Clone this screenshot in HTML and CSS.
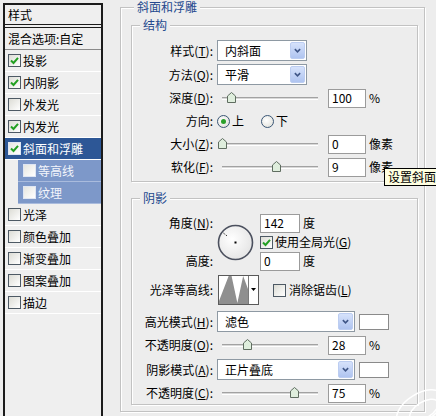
FILE: index.html
```html
<!DOCTYPE html>
<html lang="zh">
<head>
<meta charset="utf-8">
<title>图层样式</title>
<link rel="stylesheet" href="styles.css">
</head>
<body>
<div class="dialog">
  <aside class="sidebar">
    <div class="side-head">样式</div>
    <div class="side-blend">混合选项:自定</div>
    <div class="side-row"><span class="cb"><svg viewBox="0 0 11 11"><path d="M2 5.5 L4.5 8 L9 2.8"/></svg></span>投影</div>
    <div class="side-row"><span class="cb"><svg viewBox="0 0 11 11"><path d="M2 5.5 L4.5 8 L9 2.8"/></svg></span>内阴影</div>
    <div class="side-row"><span class="cb"></span>外发光</div>
    <div class="side-row"><span class="cb"><svg viewBox="0 0 11 11"><path d="M2 5.5 L4.5 8 L9 2.8"/></svg></span>内发光</div>
    <div class="side-row sel"><span class="cb"><svg viewBox="0 0 11 11"><path d="M2 5.5 L4.5 8 L9 2.8"/></svg></span>斜面和浮雕</div>
    <div class="side-row sub"><span class="cb"></span>等高线</div>
    <div class="side-row sub"><span class="cb"></span>纹理</div>
    <div class="side-row"><span class="cb"></span>光泽</div>
    <div class="side-row"><span class="cb"></span>颜色叠加</div>
    <div class="side-row"><span class="cb"></span>渐变叠加</div>
    <div class="side-row"><span class="cb"></span>图案叠加</div>
    <div class="side-row"><span class="cb"></span>描边</div>
  </aside>

  <main class="panel">
    <fieldset class="group outer">
      <legend>斜面和浮雕</legend>

      <fieldset class="group inner struct">
        <legend>结构</legend>
        <div class="row r-sel first">
          <span class="lbl">样式(<u>T</u>):</span>
          <div class="select w90"><span class="val">内斜面</span><span class="drop"><svg viewBox="0 0 14 17"><path d="M4 7 L7 10 L10 7"/></svg></span></div>
        </div>
        <div class="row r-sel">
          <span class="lbl">方法(<u>Q</u>):</span>
          <div class="select w90"><span class="val">平滑</span><span class="drop"><svg viewBox="0 0 14 17"><path d="M4 7 L7 10 L10 7"/></svg></span></div>
        </div>
        <div class="row r-sl">
          <span class="lbl">深度(<u>D</u>):</span>
          <div class="slider"><span class="track"></span><svg class="thumb" style="left:10px" viewBox="0 0 9 11"><path d="M0.5 4 L4.5 0.5 L8.5 4 V10.5 H0.5 Z"/></svg></div>
          <span class="num">100</span><span class="unit">%</span>
        </div>
        <div class="row r-sl">
          <span class="lbl">方向:</span>
          <span class="radio on"></span><span class="rtext">上</span>
          <span class="radio second"></span><span class="rtext">下</span>
        </div>
        <div class="row r-sl">
          <span class="lbl">大小(<u>Z</u>):</span>
          <div class="slider"><span class="track"></span><svg class="thumb" style="left:1px" viewBox="0 0 9 11"><path d="M0.5 4 L4.5 0.5 L8.5 4 V10.5 H0.5 Z"/></svg></div>
          <span class="num">0</span><span class="unit">像素</span>
        </div>
        <div class="row r-sl">
          <span class="lbl">软化(<u>F</u>):</span>
          <div class="slider"><span class="track"></span><svg class="thumb" style="left:55px" viewBox="0 0 9 11"><path d="M0.5 4 L4.5 0.5 L8.5 4 V10.5 H0.5 Z"/></svg></div>
          <span class="num">9</span><span class="unit">像素</span>
        </div>
      </fieldset>

      <fieldset class="group inner shade">
        <legend>阴影</legend>
        <div class="angle">
          <span class="lbl a-lbl1">角度(<u>N</u>):</span>
          <svg class="dial" viewBox="0 0 37 37">
            <defs><radialGradient id="dg" cx="40%" cy="40%" r="70%"><stop offset="0" stop-color="#ffffff"/><stop offset="1" stop-color="#e2e2e2"/></radialGradient></defs>
            <circle cx="18.5" cy="18.5" r="17" fill="url(#dg)" stroke="#4b505e" stroke-width="1.6"/>
            <rect x="17.5" y="17.5" width="2" height="2" fill="#000"/>
            <path d="M9.8 11.7 L6.2 8.9" stroke="#000" stroke-width="1" stroke-dasharray="1 1"/>
          </svg>
          <div class="a-val1"><span class="num w40">142</span><span class="unit">度</span></div>
          <div class="a-chk"><span class="cb"><svg viewBox="0 0 11 11"><path d="M2 5.5 L4.5 8 L9 2.8"/></svg></span>使用全局光(<u>G</u>)</div>
          <span class="lbl a-lbl2">高度:</span>
          <div class="a-val2"><span class="num w40">0</span><span class="unit">度</span></div>
        </div>

        <div class="row r-contour">
          <span class="lbl">光泽等高线:</span>
          <div class="contour">
            <svg class="curve" viewBox="0 0 30 28" preserveAspectRatio="none"><path d="M0 28 L0 25 L10 0 L13 0 L19 27 L25 0 L30 13 L30 28 Z"/></svg>
            <span class="cdrop"><svg viewBox="0 0 9 28"><path d="M2 12 L7 12 L4.5 15 Z"/></svg></span>
          </div>
          <span class="cb gap"></span><span>消除锯齿(<u>L</u>)</span>
        </div>

        <div class="row r-sel hl">
          <span class="lbl">高光模式(<u>H</u>):</span>
          <div class="select w138"><span class="val">滤色</span><span class="drop"><svg viewBox="0 0 14 17"><path d="M4 7 L7 10 L10 7"/></svg></span></div>
          <span class="swatch"></span>
        </div>
        <div class="row r-sl">
          <span class="lbl">不透明度(<u>O</u>):</span>
          <div class="slider"><span class="track"></span><svg class="thumb" style="left:26px" viewBox="0 0 9 11"><path d="M0.5 4 L4.5 0.5 L8.5 4 V10.5 H0.5 Z"/></svg></div>
          <span class="num">28</span><span class="unit">%</span>
        </div>
        <div class="row r-sel sh">
          <span class="lbl">阴影模式(<u>A</u>):</span>
          <div class="select w138"><span class="val">正片叠底</span><span class="drop"><svg viewBox="0 0 14 17"><path d="M4 7 L7 10 L10 7"/></svg></span></div>
          <span class="swatch"></span>
        </div>
        <div class="row r-sl">
          <span class="lbl">不透明度(<u>C</u>):</span>
          <div class="slider"><span class="track"></span><svg class="thumb" style="left:73px" viewBox="0 0 9 11"><path d="M0.5 4 L4.5 0.5 L8.5 4 V10.5 H0.5 Z"/></svg></div>
          <span class="num">75</span><span class="unit">%</span>
        </div>
      </fieldset>
    </fieldset>
  </main>

  <div class="tooltip"><span class="tip-text">设置斜面和浮雕的大小</span></div>
  <svg class="mark" viewBox="0 0 52 38"><ellipse cx="36" cy="30" rx="26" ry="14" transform="rotate(-32 36 30)"/><ellipse cx="40" cy="32" rx="16" ry="8" transform="rotate(-32 40 32)"/></svg>
</div>
</body>
</html>
```

FILE: styles.css
```css
* { box-sizing: border-box; }
html, body { margin: 0; padding: 0; }
body {
  width: 436px;
  height: 416px;
  overflow: hidden;
  background: #ededed;
  font-family: "Noto Sans CJK SC", "Noto Sans", sans-serif;
  font-size: 12px;
  line-height: 14px;
  color: #000;
}
u { text-decoration: underline; text-underline-offset: 1px; }

.dialog { position: relative; display: flex; height: 416px; overflow: hidden; }

/* ---------- sidebar ---------- */
.sidebar {
  flex: none;
  width: 100px;
  height: 413px;
  margin: 3px 0 0 3px;
  border: 2px solid #1b1b1b;
  border-bottom: none;
  background: #efefef;
}
.side-head {
  height: 23px;
  padding-left: 3px;
  display: flex;
  align-items: center;
  border-bottom: 4px double #1b1b1b;
}
.side-blend {
  height: 22px;
  padding-left: 3px;
  display: flex;
  align-items: center;
  border-bottom: 1px solid #8a8a8a;
}
.side-row {
  height: 22px;
  padding-left: 3px;
  display: flex;
  align-items: center;
  border-bottom: 1px solid #ffffff;
}
.side-row.sel { background: #2d5796; color: #fff; }
.side-row.sub {
  margin-left: 13px;
  padding-left: 5px;
  background: #7d98c9;
  color: #f3f5fb;
  border-bottom-color: #a9bbdd;
}

.cb {
  flex: none;
  width: 13px;
  height: 13px;
  margin-right: 2px;
  border: 1px solid #4d5964;
  background: linear-gradient(135deg, #dcdcd5, #ffffff);
  display: flex;
  align-items: center;
  justify-content: center;
}
.cb svg { width: 11px; height: 11px; }
.cb path { fill: none; stroke: #22a022; stroke-width: 2; }
.side-row.sel .cb, .side-row.sub .cb { border-color: #dfe6f3; background: linear-gradient(135deg, #e6e6e0, #ffffff); }

/* ---------- right panel ---------- */
.panel { flex: none; width: 333px; padding-left: 17px; }

.group {
  margin: 0;
  border: 1px solid #c2c2c2;
  box-shadow: inset 1px 1px 0 #ffffff, 1px 1px 0 #ffffff;
  min-width: 0;
}
.group > legend {
  padding: 0 3px;
  line-height: 14px;
  color: #24498e;
  background: #ededed;
}
.outer {
  width: 305px;
  height: 412px;
  padding: 4px 6px 6px 10px;
}
.outer > legend { margin-left: 3px; }
.inner { padding: 0; }
.inner > legend { margin-left: 8px; }
.struct { padding: 8px 0 4px; }
.shade { margin-top: 9px; padding: 8px 0 1px; }

.row { display: flex; align-items: center; }
.lbl { flex: none; width: 81px; margin-right: 4px; text-align: right; white-space: nowrap; }
.r-sel { height: 21px; margin-top: 3px; }
.r-sel.first { margin-top: 0; }
.r-sl { height: 20px; margin-top: 3px; }
.hl { margin-top: 6px; }
.sh { margin-top: 4px; }

.select {
  height: 21px;
  border: 1px solid #8e99a3;
  background: #fff;
  display: flex;
  align-items: center;
  padding-right: 1px;
}
.w90 { width: 90px; }
.w138 { width: 138px; }
.select .val { flex: 1; padding-left: 7px; white-space: nowrap; }
.drop {
  flex: none;
  width: 15px;
  height: 17px;
  border: 1px solid #bccdf1;
  border-radius: 2px;
  background: linear-gradient(#d6e2fb, #afc4f0);
  display: flex;
}
.drop svg { width: 13px; height: 15px; }
.drop path { fill: none; stroke: #3f5687; stroke-width: 1.8; }

.slider {
  position: relative;
  flex: none;
  width: 103px;
  height: 20px;
  margin-right: 8px;
  padding: 0 2px 0 5px;
  display: flex;
  align-items: center;
}
.track {
  display: block;
  width: 100%;
  height: 3px;
  border-top: 1px solid #a2a2a2;
  border-bottom: 1px solid #ffffff;
  background: #d8d8d8;
}
.thumb { position: absolute; top: 4px; width: 9px; height: 11px; }
.thumb path { fill: #dfeedd; stroke: #5f6d60; stroke-width: 1; }

.num {
  flex: none;
  width: 38px;
  height: 19px;
  padding-left: 3px;
  border: 1px solid #9b9b9b;
  background: #fff;
  display: flex;
  align-items: center;
}
.num.w40 { width: 40px; }
.unit { margin-left: 3px; }

.radio {
  flex: none;
  width: 13px;
  height: 13px;
  border-radius: 50%;
  border: 1px solid #3a5676;
  background: radial-gradient(circle at 40% 40%, #ffffff, #dcdcd4);
  display: flex;
  align-items: center;
  justify-content: center;
}
.radio.on::after { content: ""; width: 5px; height: 5px; border-radius: 50%; background: #2aa02a; }
.radio.second { margin-left: 17px; }
.rtext { margin-left: 2px; }

/* angle block */
.angle {
  display: grid;
  grid-template-columns: 81px 39px auto;
  grid-template-rows: 20px 18px 20px;
  column-gap: 4px;
  align-items: center;
}
.a-lbl1 { grid-row: 1; grid-column: 1; width: auto; margin: 0; }
.a-lbl2 { grid-row: 3; grid-column: 1; width: auto; margin: 0; }
.dial { grid-row: 1 / 4; grid-column: 2; width: 37px; height: 37px; align-self: center; }
.a-val1 { grid-row: 1; grid-column: 3; display: flex; align-items: center; }
.a-chk { grid-row: 2; grid-column: 3; display: flex; align-items: center; }
.a-val2 { grid-row: 3; grid-column: 3; display: flex; align-items: center; }

/* contour */
.r-contour { height: 30px; margin-top: 4px; }
.contour {
  flex: none;
  width: 41px;
  height: 30px;
  margin-left: 1px;
  border: 1px solid #5a5a5a;
  background: #fff;
  display: flex;
}
.curve { width: 29px; height: 28px; }
.curve path { fill: #8f8f8f; }
.cdrop { flex: none; width: 10px; border-left: 1px solid #7a7a7a; display: flex; }
.cdrop svg { width: 9px; height: 28px; }
.cdrop path { fill: #000; }
.cb.gap { margin-left: 14px; margin-right: 3px; }

.swatch {
  flex: none;
  width: 30px;
  height: 16px;
  margin-left: 4px;
  border: 1px solid #8a8a8a;
  background: #fff;
}

/* overlays */
.tooltip {
  position: absolute;
  left: 384px;
  right: -4px;
  top: 168px;
  height: 18px;
  padding: 0 0 0 3px;
  border: 1px solid #000;
  background: #ffffe1;
  overflow: hidden;
  display: flex;
  align-items: center;
}
.tip-text { white-space: nowrap; }
.mark { position: absolute; left: 384px; top: 378px; width: 52px; height: 38px; }
.mark ellipse { fill: none; stroke: #ffffff; stroke-width: 1.5; }
```
